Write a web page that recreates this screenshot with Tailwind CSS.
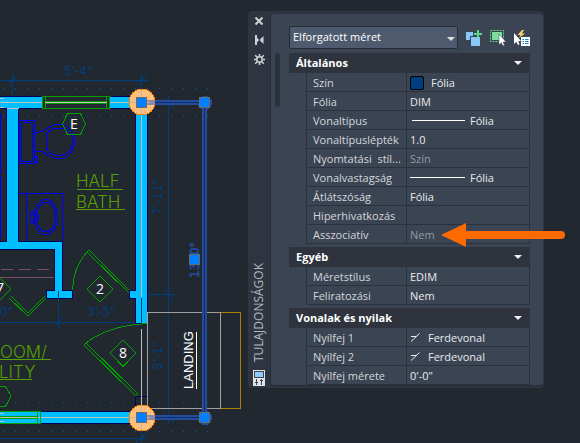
<!DOCTYPE html>
<html lang="hu">
  <head>
    <meta charset="UTF-8" />
    <meta name="viewport" content="width=device-width, initial-scale=1.0" />
    <title>Tulajdonságok</title>
    <script src="https://cdn.jsdelivr.net/npm/@tailwindcss/browser@4"></script>
  </head>
  <body class="flex min-h-screen items-start overflow-hidden bg-[#212830] font-['Open_Sans','Noto_Sans',sans-serif] text-[11px] text-[#e8eaed]">
    <!-- Floor plan -->
    <svg class="h-[443px] w-62 shrink-0" viewBox="0 0 248 443" fill="none" shape-rendering="crispEdges">
      <!-- Dimension lines -->
      <g stroke="#003f7f">
        <path d="M0 80.5H148M12.5 74V100M7 86L17 75M141.5 74V96M136 85L147 75" />
        <path d="M168.5 96V424M163 98L174 108M137 294.5H175M163 289L174 300M163 412L174 423" />
        <path d="M0 322.5H147M58.5 291V329M54 327L64 317M137 327L147 317" />
        <path d="M0 438.5H147M141.5 424V443M136 443L147 433" />
      </g>
      <g stroke="#005aa8" stroke-dasharray="1 11">
        <path d="M3 88.5H216M3 116.5H216M3 402.5H216M3 431.5H216" />
      </g>
      <g fill="#003f7f" class="font-['DejaVu_Sans',sans-serif] text-[12px]">
        <text x="64" y="75">5'-4"</text>
        <text x="87" y="316">3'-5"</text>
        <text x="0" y="316">0"</text>
        <text transform="translate(162 215) rotate(-90)">7'-11"</text>
        <text transform="translate(162 370) rotate(-90)">5'-1"</text>
      </g>

      <!-- Fixtures -->
      <g stroke="#0000ff">
        <path d="M.5 113V174M.5 176V239" />
        <rect x="19.5" y="120.5" width="15" height="43" />
        <rect x="21.5" y="122.5" width="11" height="39" rx="3" />
        <path d="M34.5 156.5H37.5V162.5H34.5M35 133L43 131C48 128 53 124 59 124C68 124 74.500 132 74.500 141C74.500 151 68 159 59 159C53 159 47 155 43 152L35 151" />
        <path d="M46.500 134C50 129 54 128 59 128C67 128 72.500 133 72.500 141C72.500 150 66 155.500 59 155.500C53 155.500 49 153 46.500 149Z" />
        <path d="M18 193.500H62.500V242M26.500 193V242" />
        <ellipse cx="46" cy="217" rx="11.500" ry="17.500" />
        <ellipse cx="46" cy="217" rx="9.500" ry="15" />
        <path d="M33 212H30.500V222H33M33 215.500H38.500V218.500H33V224M33 210V215" />
      </g>
      <path d="M0 277.500H55" stroke="#7a4f63" />
      <path d="M1 269.500H55" stroke="#7a4f63" stroke-dasharray="12 6" />

      <!-- Walls -->
      <g fill="#00bfff" stroke="#00005f">
        <path d="M-1 96.500H136V108.500H18.500V241.500H62.500V290.500H72.500V298.500H46.500V290.500H54.500V249.500H-1V241.500H6.500V108.500H-1Z" />
        <path d="M135.500 110V290.500H129.500V298.500H135.500V323.500H147.500V110Z" />
        <rect x="-1" y="411.500" width="137" height="12" />
        <path d="M135.500 396.500H147.500V411.500H135.500Z" fill="none" />
      </g>
      <path d="M58.500 291V299M141.500 298V324" stroke="#003f7f" />
      <g stroke="#bfbfbf">
        <path d="M0 102.500H130M0 98.500H4M0 107.500H4M141.500 114V297M141.500 329V405M0 417.500H130M0 413.500H4M0 421.500H4M7 108.500H19" />
      </g>

      <!-- Windows, doors and tags -->
      <g stroke="#00a000">
        <rect x="42.500" y="96.500" width="67" height="12" fill="#212830" />
        <path d="M45.500 97V108M106.500 97V108M45 101.500H107M45 103.500H107" />
        <path d="M45 102.500H107" stroke="#bfbfbf" />
        <path d="M0 411.500H40.500V423.500H0M37.500 411V424M0 416.500H38M0 418.500H38" />
        <path d="M67.500 113.500H80.500L85.500 124L80.500 134.500H67.500L62.500 124Z" />
        <path d="M100 276L113 289L100 302L87 289Z" />
        <path d="M123 340L136 353L123 366.500L110 353Z" />
        <path d="M-1 277L11 289L-1 301M0 386.500H5.500L11 396L5.500 406.500H0" />
      </g>
      <g stroke="#00a000">
        <path d="M89 250L129 290M87 252L129 293M89 250L87 252C78 262 73 276 72.500 290" />
        <path d="M86 343L138 394L136 396L84 345Z" />
        <path d="M86 343C100 332 120 325 147 323.500" />
        <path d="M11 296L28 313L45 296M9 298L28 316L46 298" />
      </g>
      <g fill="#ffffff" class="font-['Open_Sans',sans-serif] text-[14px]">
        <text x="70" y="129">E</text>
        <text x="96" y="294">2</text>
        <text x="119" y="358">8</text>
        <text x="-4" y="293">7</text>
      </g>

      <!-- Room names -->
      <g fill="#559f00" class="font-['Inter',sans-serif] text-[17px] font-light">
        <text x="76" y="187">HALF</text>
        <text x="76" y="208">BATH</text>
        <text x="0" y="358">OOM/</text>
        <text x="-1" y="378">LITY</text>
        <path d="M77 189.500H123M76 209.500H125M0 359.500H51M0 379.500H32" stroke="#559f00" />
      </g>

      <!-- Landing -->
      <path d="M220 312.500H240.500V408.500H220" stroke="#b08000" />
      <rect x="147.500" y="312.500" width="73" height="96" stroke="#a0a0a0" />
      <path d="M196.500 332V389" stroke="#ffffff" />
      <text transform="translate(193 389) rotate(-90)" fill="#ffffff" class="font-['Liberation_Sans',sans-serif] text-[13px]">LANDING</text>

      <!-- Selected dimension with grips -->
      <path d="M142 102.500H204.500V417.500H142" stroke="#2a4b98" stroke-width="5" />
      <g fill="#2a4b98">
        <circle cx="205" cy="103" r="7" />
        <circle cx="205" cy="418" r="7" />
      </g>
      <path d="M142 102.500H204.500V417.500H142" stroke="#003070" />
      <text transform="translate(199 278) rotate(-90)" fill="#0a59b5" stroke="#2a4b98" stroke-width="0.500" class="font-['DejaVu_Sans',sans-serif] text-[12px]">13'-0"</text>
      <g fill="#ffbf7f" stroke="#ff8000">
        <circle cx="142" cy="102" r="13" />
        <circle cx="142" cy="418" r="13" />
      </g>
      <path d="M147 102.500H155M147 417.500H155" stroke="#8b8ba8" stroke-width="5" />
      <path d="M130 102.500H150M141.500 90V114M130 417.500H150M141.500 405V430" stroke="#c5b5a5" />
      <g fill="#007fff" stroke="#6b6b6b">
        <rect x="136.500" y="97.500" width="10" height="10" />
        <rect x="199.500" y="97.500" width="10" height="10" />
        <rect x="189.500" y="254.500" width="10" height="10" />
        <rect x="136.500" y="412.500" width="10" height="10" />
        <rect x="199.500" y="412.500" width="10" height="10" />
      </g>
    </svg>

    <!-- Properties palette -->
    <aside class="mt-[11px] mr-9 flex min-w-0 flex-1 rounded-sm bg-[#2f3540] pt-[3px] pr-px pb-0.5">
      <div class="flex w-[22px] shrink-0 flex-col items-center pt-0.5">
        <button aria-label="Bezárás" class="flex h-[19px] w-full items-start justify-center">
          <svg class="size-[10px]" viewBox="0 0 10 10"><path d="M1.500 1.500L8.500 8.500M8.500 1.500L1.500 8.500" stroke="#d0d3d8" stroke-width="2" /></svg>
        </button>
        <button aria-label="Automatikus elrejtés" class="flex h-[19px] w-full items-start justify-center">
          <svg class="size-[10px]" viewBox="0 0 10 10" fill="#d0d3d8"><path d="M1 0H3V10H1ZM3 2.500L5 5L3 7.500ZM9.500 1V9L5.500 5Z" /></svg>
        </button>
        <button aria-label="Beállítások" class="flex h-[19px] w-full items-start justify-center">
          <svg class="size-[11px]" viewBox="0 0 11 11" fill="none" stroke="#d0d3d8"><circle cx="5.500" cy="5.500" r="2.700" stroke-width="1.500" /><path d="M5.500 0V2.500M5.500 8.500V11M0 5.500H2.500M8.500 5.500H11M1.200 1.200L3.200 3.200M7.800 7.800L9.800 9.800M9.800 1.200L7.800 3.200M3.200 7.800L1.200 9.800" stroke-width="1.500" /></svg>
        </button>
        <h1 class="mt-auto rotate-180 text-xs text-[#b4b8bf] [writing-mode:vertical-rl]">TULAJDONSÁGOK</h1>
        <svg class="mt-2 h-4 w-3 shrink-0" viewBox="0 0 12 16" shape-rendering="crispEdges">
          <path d="M0 0H12V16H0Z" fill="#e3e3e3" />
          <path d="M1.500 1.500H10.500V7.500H1.500Z" fill="#8ecbff" stroke="#3b4453" />
          <path d="M3.500 9V15M8.500 9V15M2 12.500H5M7 10.500H10" stroke="#3b4453" />
        </svg>
      </div>

      <div class="flex min-w-0 flex-1 rounded-sm border-b border-l border-[#262c36] bg-[#3b4453]">
        <div class="mt-[39px] mr-[9px] ml-1 h-[54px] w-[5px] shrink-0 rounded-full bg-[#2b303b]"></div>
        <div class="min-w-0 flex-1 pt-3 pr-[13px]">
          <div class="mb-1 flex items-center gap-2">
            <label class="relative flex-1">
              <span class="sr-only">Objektumtípus</span>
              <select class="block h-[23px] w-full appearance-none rounded-xs border border-[#262c36] bg-[#4e5b6e] pl-[3px] text-[11px] text-white">
                <option>Elforgatott méret</option>
              </select>
              <svg class="pointer-events-none absolute top-[11px] right-[3px] h-1 w-2" viewBox="0 0 8 4" fill="#dcdfe3"><path d="M0 0H8L4 4Z" /></svg>
            </label>
            <button aria-label="PICKADD váltása">
              <svg class="size-4" viewBox="0 0 16 16" shape-rendering="crispEdges"><path d="M0 2H8V10H0Z" fill="#8ac6f8" /><path d="M4 6H14V16H4Z" fill="#3b4453" /><path d="M5 7H14V16H5Z" fill="#8ac6f8" /><path d="M7 0H16V7H7Z" fill="#3b4453" /><path d="M12 0V8M8 4H16" stroke="#57d987" stroke-width="2" /></svg>
            </button>
            <button aria-label="Objektumok kiválasztása">
              <svg class="size-4" viewBox="0 0 16 16"><path d="M.5 .5H13.500V11.500H.5Z" fill="none" stroke="#57d987" stroke-dasharray="2 1" /><path d="M2 2H12V10H2Z" fill="#7fdc9f" /><path d="M9 4V15L11.300 12.800L13 16L14.500 15.200L13.200 12H16Z" fill="#fff" stroke="#3b4453" stroke-width=".5" /></svg>
            </button>
            <button aria-label="Gyorskiválasztás">
              <svg class="size-4" viewBox="0 0 16 16"><path d="M8 0L3.500 5H6.500L5 8L11 3.500H8L10 0Z" fill="#ffcf70" /><path d="M0 3V14L2.300 11.800L4 15L5.500 14.200L4.200 11H7Z" fill="#fff" /><path d="M7 7H16V16H7Z" fill="#fff" /><path d="M8.500 9.500H10M11 9.500H14.500M8.500 11.500H10M11 11.500H14.500M8.500 13.500H10M11 13.500H14.500" stroke="#1683c8" /></svg>
            </button>
          </div>

          <section class="mb-[3px]">
            <h2>
              <button class="flex h-5 w-full items-center justify-between bg-[#2e333e] pr-2 pl-[7px] font-bold text-white">
                Általános
                <svg class="h-1 w-2" viewBox="0 0 8 4" fill="#eef0f2"><path d="M0 0H8L4 4Z" /></svg>
              </button>
            </h2>
            <div class="pl-[17px]">
              <table class="w-full table-fixed border-separate border-spacing-0 border-l border-[#2c323d] text-left leading-[17px] [&_td]:h-[19px] [&_td]:border-r [&_td]:border-b [&_td]:border-[#2c323d] [&_td]:p-0 [&_td]:pt-px [&_td]:pl-[3px] [&_th]:w-[100px] [&_th]:border-r [&_th]:border-b [&_th]:border-[#2c323d] [&_th]:p-0 [&_th]:pt-px [&_th]:pl-1.5 [&_th]:font-normal [&_th]:whitespace-nowrap [&_th]:text-[#d3d6db]">
                <tr><th scope="row">Szín</th><td><span class="flex items-center gap-[7px]"><span class="size-[14px] rounded-xs border border-black bg-[#003f7f]"></span>Fólia</span></td></tr>
                <tr><th scope="row">Fólia</th><td>DIM</td></tr>
                <tr><th scope="row">Vonaltípus</th><td><span class="flex items-center gap-[5px] pl-0.5"><span class="h-px w-[53px] bg-white"></span>Fólia</span></td></tr>
                <tr><th scope="row">Vonaltípuslépték</th><td>1.0</td></tr>
                <tr><th scope="row">Nyomtatási&nbsp; stíl...</th><td class="text-[#939aa5]">Szín</td></tr>
                <tr><th scope="row">Vonalvastagság</th><td><span class="flex items-center gap-[5px]"><span class="h-px w-[55px] bg-white"></span>Fólia</span></td></tr>
                <tr><th scope="row">Átlátszóság</th><td>Fólia</td></tr>
                <tr><th scope="row">Hiperhivatkozás</th><td></td></tr>
                <tr>
                  <th scope="row">Asszociatív</th>
                  <td class="relative text-[#939aa5]">
                    Nem
                    <!-- Callout arrow -->
                    <svg class="absolute -top-[2px] left-[34px] h-6 w-[124px]" viewBox="0 0 124 24"><path d="M0 12L25 0V8H120A4 4 0 0 1 120 16H25V24Z" fill="#ff6a00" /></svg>
                  </td>
                </tr>
              </table>
            </div>
          </section>

          <section class="mb-[3px]">
            <h2>
              <button class="flex h-5 w-full items-center justify-between bg-[#2e333e] pr-2 pl-[7px] font-bold text-white">
                Egyéb
                <svg class="h-1 w-2" viewBox="0 0 8 4" fill="#eef0f2"><path d="M0 0H8L4 4Z" /></svg>
              </button>
            </h2>
            <div class="pl-[17px]">
              <table class="w-full table-fixed border-separate border-spacing-0 border-l border-[#2c323d] text-left leading-[17px] [&_td]:h-[19px] [&_td]:border-r [&_td]:border-b [&_td]:border-[#2c323d] [&_td]:p-0 [&_td]:pt-px [&_td]:pl-[3px] [&_th]:w-[100px] [&_th]:border-r [&_th]:border-b [&_th]:border-[#2c323d] [&_th]:p-0 [&_th]:pt-px [&_th]:pl-1.5 [&_th]:font-normal [&_th]:whitespace-nowrap [&_th]:text-[#d3d6db]">
                <tr><th scope="row">Méretstílus</th><td>EDIM</td></tr>
                <tr><th scope="row">Feliratozási</th><td>Nem</td></tr>
              </table>
            </div>
          </section>

          <section>
            <h2>
              <button class="flex h-5 w-full items-center justify-between bg-[#2e333e] pr-2 pl-[7px] font-bold text-white">
                Vonalak és nyilak
                <svg class="h-1 w-2" viewBox="0 0 8 4" fill="#eef0f2"><path d="M0 0H8L4 4Z" /></svg>
              </button>
            </h2>
            <div class="pl-[17px]">
              <table class="w-full table-fixed border-separate border-spacing-0 border-l border-[#2c323d] text-left leading-[17px] [&_td]:h-[19px] [&_td]:border-r [&_td]:border-b [&_td]:border-[#2c323d] [&_td]:p-0 [&_td]:pt-px [&_td]:pl-[3px] [&_th]:w-[100px] [&_th]:border-r [&_th]:border-b [&_th]:border-[#2c323d] [&_th]:p-0 [&_th]:pt-px [&_th]:pl-1.5 [&_th]:font-normal [&_th]:whitespace-nowrap [&_th]:text-[#d3d6db]">
                <tr><th scope="row">Nyílfej 1</th><td><span class="flex items-center gap-2"><svg class="h-[9px] w-[10px]" viewBox="0 0 10 9" stroke="#e8eaed"><path d="M1 8.500L9.500 .5M1 3.500H6.500" /></svg>Ferdevonal</span></td></tr>
                <tr><th scope="row">Nyílfej 2</th><td><span class="flex items-center gap-2"><svg class="h-[9px] w-[10px]" viewBox="0 0 10 9" stroke="#e8eaed"><path d="M1 8.500L9.500 .5M1 3.500H6.500" /></svg>Ferdevonal</span></td></tr>
                <tr><th scope="row">Nyílfej mérete</th><td>0'-0"</td></tr>
              </table>
            </div>
          </section>
        </div>
      </div>
    </aside>
  </body>
</html>
